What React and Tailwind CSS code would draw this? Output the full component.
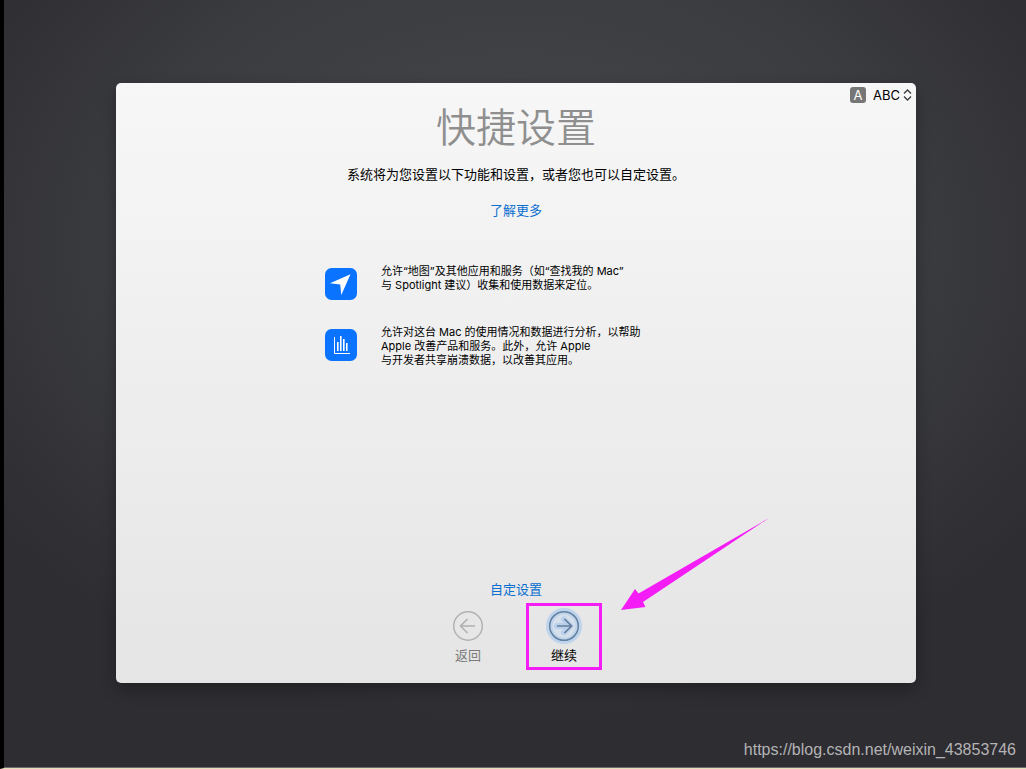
import React, { useState } from 'react';

const features = [
  {
    id: 'location',
    icon: <LocationIcon />,
    lines: ['允许“地图”及其他应用和服务（如“查找我的 Mac”', '与 Spotlight 建议）收集和使用数据来定位。']
  },
  {
    id: 'analytics',
    icon: <AnalyticsIcon />,
    lines: [
      '允许对这台 Mac 的使用情况和数据进行分析，以帮助',
      'Apple 改善产品和服务。此外，允许 Apple',
      '与开发者共享崩溃数据，以改善其应用。'
    ]
  }
];

function LocationIcon() {
  return (
    <svg viewBox="0 0 32 32" className="size-8 shrink-0" aria-hidden="true">
      <rect width="32" height="32" rx="6.5" fill="#0a73ff" />
      <path d="M25.5 6.3L16.3 27L15.2 16.5L5 15.3Z" fill="#fff" />
    </svg>
  );
}

function AnalyticsIcon() {
  return (
    <svg viewBox="0 0 32 32" className="size-8 shrink-0" aria-hidden="true">
      <rect width="32" height="32" rx="6.5" fill="#0a73ff" />
      <path d="M9 8h1v16h15v1H9z" fill="#fff" />
      <path d="M12 13h1.600v9H12zM15 7h1.600v15H15zM18 10h1.600v12H18zM21 14h1.600v8H21z" fill="#fff" />
    </svg>
  );
}

function BackIcon() {
  return (
    <svg viewBox="0 0 36 36" className="size-9" fill="none" stroke="#b0b0b0" aria-hidden="true">
      <circle cx="18" cy="18" r="14.3" strokeWidth="1.4" />
      <path d="M25 18H11M17.5 11L10.5 18l7 7" strokeWidth="1.6" />
    </svg>
  );
}

function ContinueIcon() {
  return (
    <svg viewBox="0 0 36 36" className="size-9" fill="none" aria-hidden="true">
      <circle cx="18" cy="18" r="18" fill="#bed3ec" />
      <circle cx="18" cy="18" r="11.5" fill="#d6e0eb" />
      <path d="M11 18H24M18 11.5L24.5 18L18 24.5" stroke="#b9d0ec" strokeWidth="6" strokeLinecap="round" strokeLinejoin="round" />
      <circle cx="18" cy="18" r="14.3" stroke="#64809f" strokeWidth="1.5" />
      <path d="M11 18H25M18.5 11L25.5 18l-7 7" stroke="#647d99" strokeWidth="1.7" />
    </svg>
  );
}

export default function App() {
  const [layout, setLayout] = useState('ABC');

  return (
    <div
      lang="zh-CN"
      className="flex min-h-screen flex-col border-b border-l-4 border-b-[#e3dfb8] border-l-black bg-[#2e2d31] bg-[radial-gradient(ellipse_62%_62%_at_50%_32%,#484a4e_0%,#3a3b3f_65%,#2e2d31_100%)] font-['Inter','Noto_Sans_CJK_SC',sans-serif]"
    >
      <main className="flex justify-center pt-[83px] pr-[110px] pl-28">
        <section className="flex min-h-[600px] w-full max-w-[800px] flex-col items-center rounded-[5px] bg-linear-to-b from-[#f7f7f7] to-[#e5e5e5] pb-[13px] shadow-[0_6px_16px_rgba(0,0,0,0.3)]">
          <div className="flex h-6 items-center gap-[7px] self-end pr-1">
            <span className="flex size-4 items-center justify-center rounded-[3px] bg-[#767676] text-[13px] leading-4 text-white">A</span>
            <div className="relative">
              <select
                aria-label="键盘布局"
                value={layout}
                onChange={(e) => setLayout(e.target.value)}
                className="block w-[39px] appearance-none bg-transparent text-[13px] leading-5 text-black"
              >
                <option>ABC</option>
              </select>
              <svg viewBox="0 0 9 12" className="pointer-events-none absolute top-1 right-0 h-3 w-[9px]" fill="none" stroke="#3c3c3c" strokeWidth="1.3" aria-hidden="true">
                <path d="M1 4.500L4.500 1L8 4.500M1 7.500L4.500 11L8 7.500" />
              </svg>
            </div>
          </div>

          <h1 className="mt-px text-[40px] leading-10 font-[350] text-[#8f8f8f]">快捷设置</h1>
          <p className="mt-4 text-[13px] leading-5 text-black">
            系统将为您设置以下功能和设置，或者您也可以自定设置。
          </p>
          <a href="#more" className="mt-4 text-[13px] leading-5 text-[#0b6fd0]">了解更多</a>

          <ul className="mt-11 flex w-full max-w-[382px] flex-col gap-[25px]">
            {features.map((feature) => (
              <li key={feature.id} className="flex gap-6">
                <div className="pt-1">{feature.icon}</div>
                <p className="text-[11px] leading-[14px] text-black">
                  {feature.lines.map((line) => (
                    <span key={line} className="block whitespace-nowrap">{line}</span>
                  ))}
                </p>
              </li>
            ))}
          </ul>

          <a href="#customize" className="mt-auto text-[13px] leading-5 text-[#0b6fd0]">自定设置</a>
          <div className="mt-1 flex gap-5">
            <button type="button" className="flex h-[67px] w-[76px] flex-col items-center gap-px pt-[5px] text-[13px] leading-5 text-[#7a7a7a]">
              <BackIcon />
              返回
            </button>
            <div className="relative">
              <button type="button" className="flex h-[67px] w-[76px] flex-col items-center gap-px border-3 border-[#f51df5] pt-0.5 text-[13px] leading-5 text-black">
                <ContinueIcon />
                继续
              </button>
              {/* arrow pointing at the continue button */}
              <svg viewBox="0 0 148 92" className="pointer-events-none absolute -top-[85px] left-[95px] h-[92px] w-[148px]" aria-hidden="true">
                <path d="M0 92L14 71L17.500 75.500L148 0L22 84L24.500 89Z" fill="#f51df5" />
              </svg>
            </div>
          </div>
        </section>
      </main>

      <footer className="mt-auto border-b border-[#6a6a6c] pt-8 pr-[10px] pb-[7px] text-right font-['Liberation_Sans',sans-serif] text-base leading-5 text-[#b4b4b6]">
        https://blog.csdn.net/weixin_43853746
      </footer>
    </div>
  );
}
